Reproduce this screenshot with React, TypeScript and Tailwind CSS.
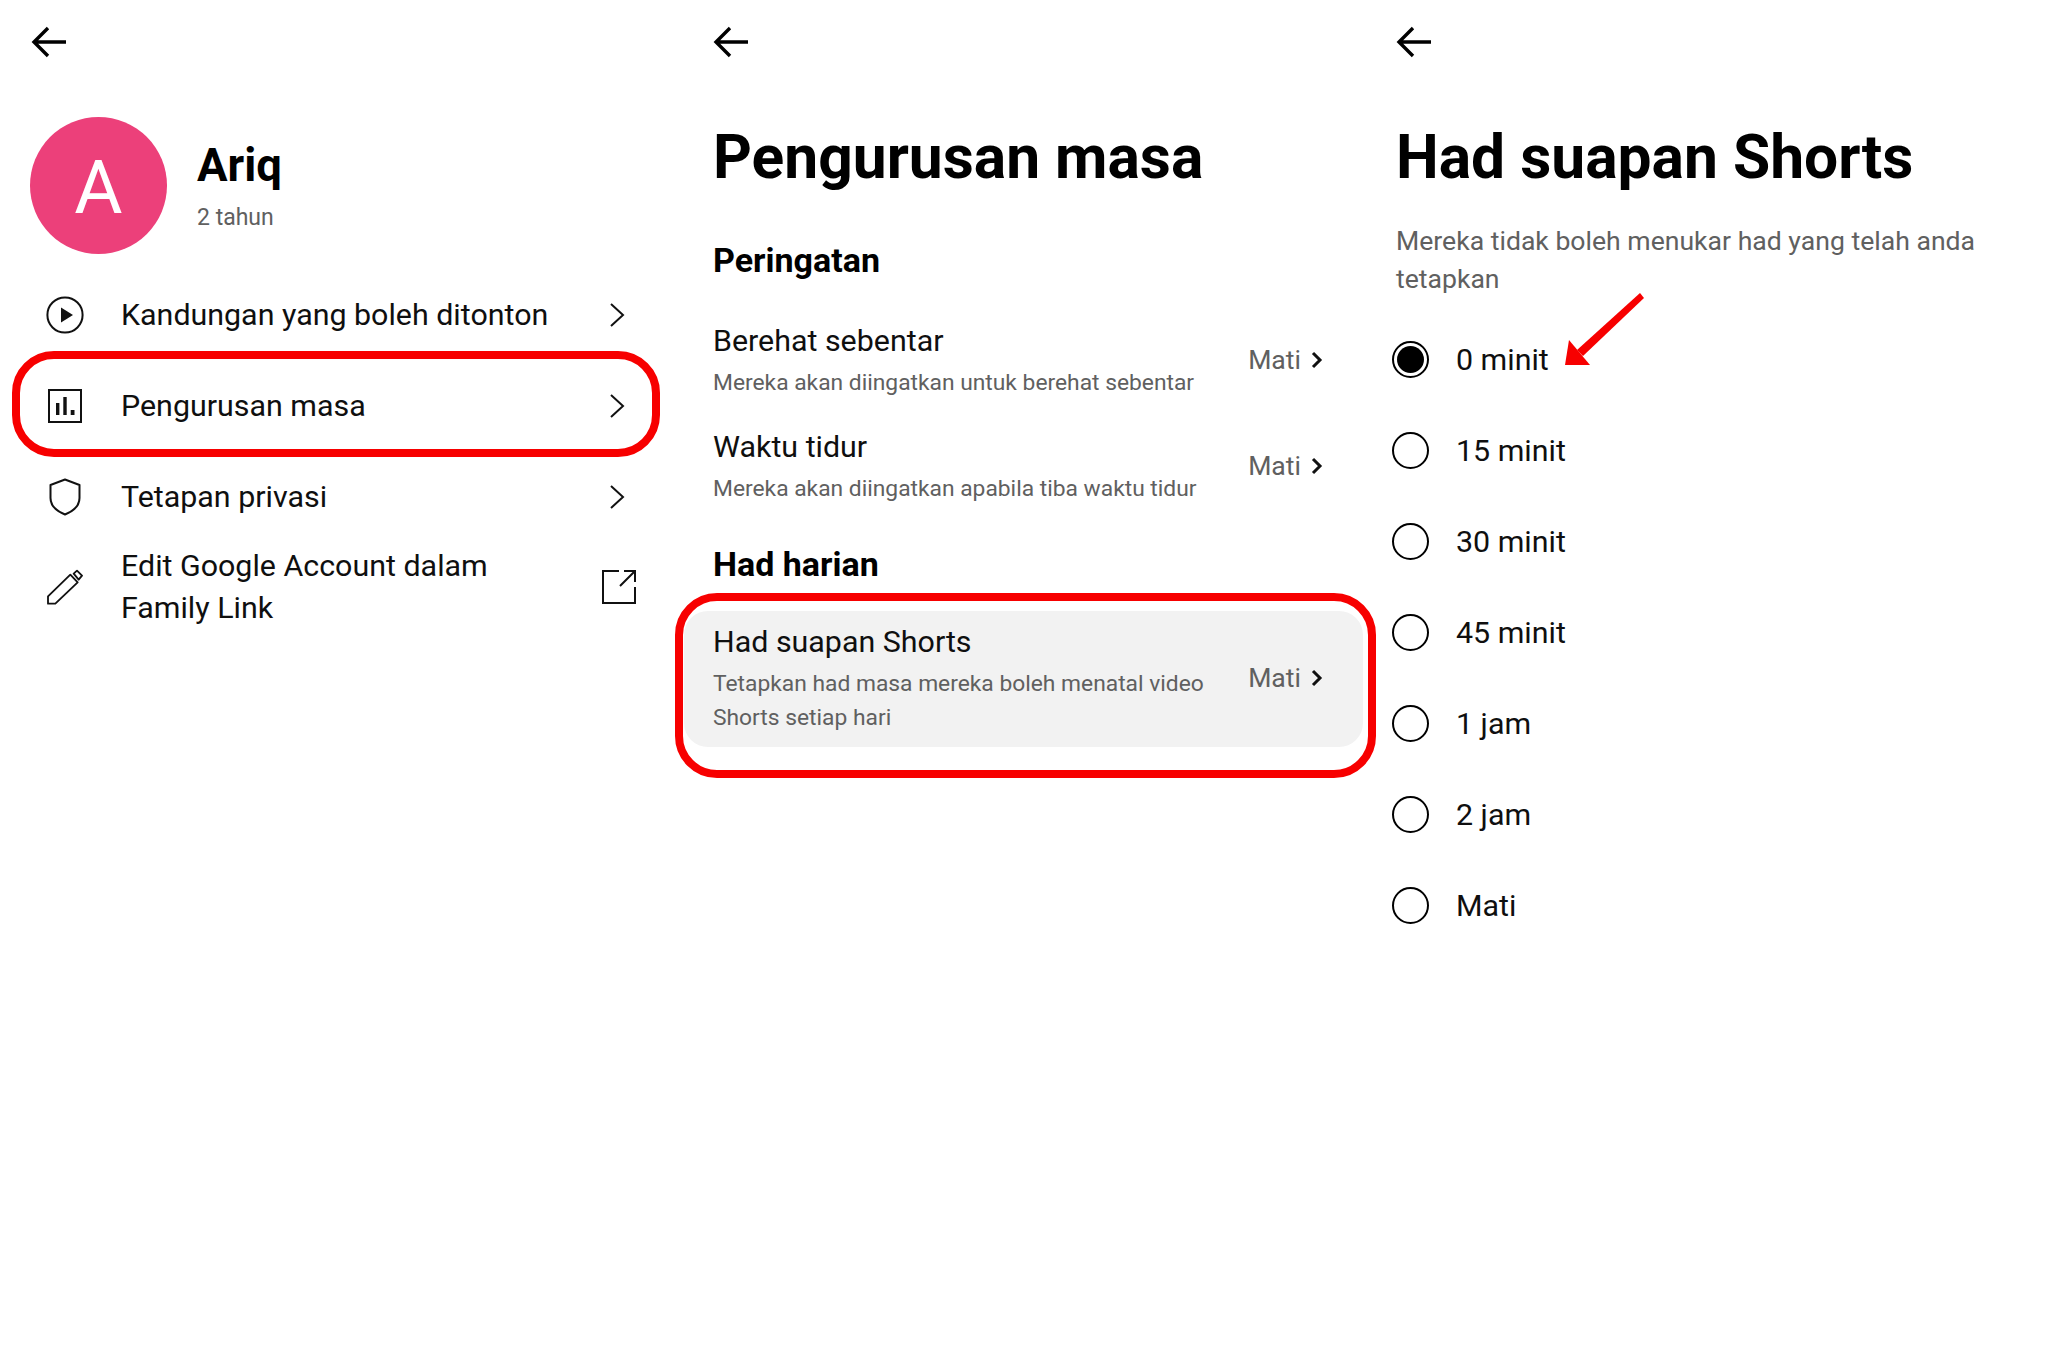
const font = { fontFamily: 'Roboto, sans-serif' }

function BackArrow() {
  return (
    <svg width="36" height="32" viewBox="0 0 36 32" fill="none" stroke="#000" strokeWidth="3.4">
      <path d="M35 16H3M17 2 3 16l14 14" />
    </svg>
  )
}

function Chevron() {
  return (
    <svg width="16" height="26" viewBox="0 0 16 26" fill="none" stroke="#111" strokeWidth="2">
      <path d="M2 2l12 11L2 24" />
    </svg>
  )
}

function SmallChevron() {
  return (
    <svg width="12" height="18" viewBox="0 0 12 18" fill="none" stroke="#111" strokeWidth="3">
      <path d="M2 2l7 7-7 7" />
    </svg>
  )
}

function PlayIcon() {
  return (
    <svg width="38" height="38" viewBox="0 0 38 38" fill="none">
      <circle cx="19" cy="19" r="17.6" stroke="#111" strokeWidth="2" />
      <path d="M15 11.500 27 19l-12 7.500z" fill="#111" />
    </svg>
  )
}

function ChartIcon() {
  return (
    <svg width="34" height="34" viewBox="0 0 34 34" fill="none">
      <rect x="1" y="1" width="32" height="32" stroke="#111" strokeWidth="2" />
      <path d="M8 14h3.400v12H8zM15.300 8h3.400v18h-3.400zM22.700 21h3.800v5h-3.800z" fill="#111" />
    </svg>
  )
}

function ShieldIcon() {
  return (
    <svg width="32" height="38" viewBox="0 0 32 38" fill="none" stroke="#111" strokeWidth="2">
      <path d="M16 1.500 30.500 7v13c0 8-7 13.500-14.500 16.500C8.500 33.500 1.500 28 1.500 20V7z" strokeLinejoin="round" />
    </svg>
  )
}

function PencilIcon() {
  return (
    <svg width="36" height="36" viewBox="80 868 108 108" fill="none" stroke="#111" strokeWidth="5.5" strokeLinejoin="round">
      <path d="M83 950l67-65 22 23-67 64H83zM160 882l10-9 15 15-10 12z" />
    </svg>
  )
}

function ExternalIcon() {
  return (
    <svg width="34" height="34" viewBox="0 0 34 34" fill="none" stroke="#111" strokeWidth="2">
      <path d="M17 1H1v32h32V17M33 1 18 16M22 1h11v11" />
    </svg>
  )
}

function MenuRow({ icon, label, highlight }: { icon: React.ReactNode; label: string; highlight?: boolean }) {
  return (
    <div className="relative flex h-[91px] items-center pl-[45px] pr-[58px]">
      <div className="flex w-[40px] justify-center">{icon}</div>
      <div className="ml-[36px] flex-1 text-[30.4px] leading-[42px] text-[#0f0f0f]">{label}</div>
      <Chevron />
      {highlight && (
        <div className="absolute left-[12px] top-[-9px] h-[106px] w-[648px] rounded-[42px] border-[8px] border-[#f70000]" />
      )}
    </div>
  )
}

function TimerRow({ title, lines }: { title: string; lines: string[] }) {
  return (
    <div className="flex items-center justify-between">
      <div>
        <div className="text-[30.4px] leading-[38px] text-[#0f0f0f]">{title}</div>
        <div className="mt-[6px] text-[22.8px] leading-[34px] text-[#606060]">
          {lines.map((l) => (
            <div key={l}>{l}</div>
          ))}
        </div>
      </div>
      <div className="mb-[2px] mr-[40px] flex items-center gap-[10px]">
        <span className="text-[26.6px] leading-[34px] text-[#606060]">Mati</span>
        <SmallChevron />
      </div>
    </div>
  )
}

function Radio({ label, checked }: { label: string; checked?: boolean }) {
  return (
    <div className="flex h-[91px] items-center">
      <div className="-ml-[4px] flex h-[37px] w-[37px] items-center justify-center rounded-full border-2 border-black">
        {checked && <div className="h-[27px] w-[27px] rounded-full bg-black" />}
      </div>
      <span className="ml-[27px] text-[30.4px] leading-[38px] text-[#0f0f0f]">{label}</span>
    </div>
  )
}

export default function App() {
  return (
    <div className="flex min-h-[1365px] w-[2048px] bg-white" style={font}>
      {/* kiri */}
      <div className="w-[683px]">
        <div className="ml-[31px] pt-[26px]">
          <BackArrow />
        </div>
        <div className="ml-[30px] mt-[59px] flex h-[137px]">
          <div className="flex h-[137px] w-[137px] items-center justify-center rounded-full bg-[#ec407a] pt-[4px] text-[74px] text-white">A</div>
          <div className="ml-[30px] pt-[24px]">
            <div className="text-[45.5px] font-bold leading-[50px] text-black">Ariq</div>
            <div className="mt-[12px] text-[23px] leading-[30px] text-[#606060]">2 tahun</div>
          </div>
        </div>
        <div className="mt-[15px]">
          <MenuRow icon={<PlayIcon />} label="Kandungan yang boleh ditonton" />
          <MenuRow icon={<ChartIcon />} label="Pengurusan masa" highlight />
          <MenuRow icon={<ShieldIcon />} label="Tetapan privasi" />
          <div className="flex h-[90px] items-center pl-[45px] pr-[47px]">
            <div className="flex w-[40px] justify-center">
              <PencilIcon />
            </div>
            <div className="ml-[36px] flex-1 text-[30.4px] leading-[42px] text-[#0f0f0f]">
              Edit Google Account dalam
              <br />
              Family Link
            </div>
            <ExternalIcon />
          </div>
        </div>
      </div>

      {/* tengah */}
      <div className="w-[683px] pl-[30px]">
        <div className="pt-[26px]">
          <BackArrow />
        </div>
        <h1 className="mt-[68px] text-[60.5px] font-bold leading-[64px] text-black">Pengurusan masa</h1>
        <h2 className="mt-[50px] text-[34px] font-bold leading-[40px] text-black">Peringatan</h2>
        <div className="mr-[3px] mt-[42px]">
          <TimerRow title="Berehat sebentar" lines={['Mereka akan diingatkan untuk berehat sebentar']} />
        </div>
        <div className="mr-[3px] mt-[28px]">
          <TimerRow title="Waktu tidur" lines={['Mereka akan diingatkan apabila tiba waktu tidur']} />
        </div>
        <h2 className="mt-[38px] text-[34px] font-bold leading-[40px] text-black">Had harian</h2>
        <div className="relative -ml-[29px] mr-[3px] mt-[27px] rounded-[24px] bg-[#f2f2f2] pb-[12px] pl-[29px] pt-[12px]">
          <TimerRow title="Had suapan Shorts" lines={['Tetapkan had masa mereka boleh menatal video', 'Shorts setiap hari']} />
          <div className="absolute -left-[9px] -right-[13px] -top-[18px] h-[185px] rounded-[42px] border-[8px] border-[#f70000]" />
        </div>
      </div>

      {/* kanan */}
      <div className="w-[682px] pl-[30px]">
        <div className="pt-[26px]">
          <BackArrow />
        </div>
        <h1 className="mt-[68px] text-[60.5px] font-bold leading-[64px] text-black">Had suapan Shorts</h1>
        <p className="mt-[32px] w-[600px] text-[26.6px] leading-[38px] text-[#606060]">
          Mereka tidak boleh menukar had yang telah anda tetapkan
        </p>
        <div className="relative mt-[16px]">
          <Radio label="0 minit" checked />
          <Radio label="15 minit" />
          <Radio label="30 minit" />
          <Radio label="45 minit" />
          <Radio label="1 jam" />
          <Radio label="2 jam" />
          <Radio label="Mati" />
          <svg className="absolute left-[168px] top-[-22px]" width="81" height="74" viewBox="0 0 81 74" fill="#f70000">
            <path d="M5 48 26 73 1 73z" />
            <path d="M13 58 76 1l4 5-61 58z" />
          </svg>
        </div>
      </div>
    </div>
  )
}
